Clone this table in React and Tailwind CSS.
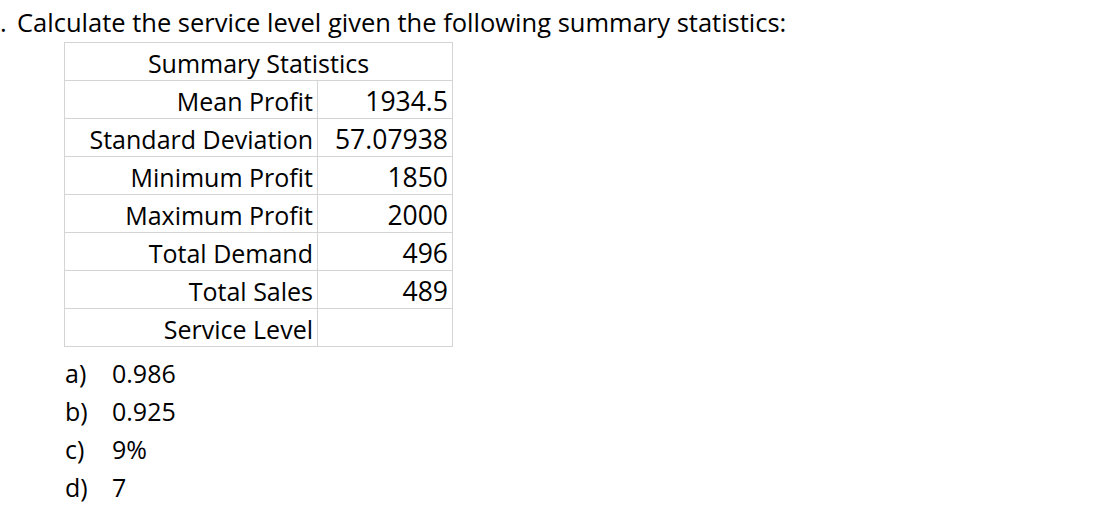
const rows = [
  ["Mean Profit", "1934.5"],
  ["Standard Deviation", "57.07938"],
  ["Minimum Profit", "1850"],
  ["Maximum Profit", "2000"],
  ["Total Demand", "496"],
  ["Total Sales", "489"],
  ["Service Level", ""],
];

const options = [
  ["a)", "0.986"],
  ["b)", "0.925"],
  ["c)", "9%"],
  ["d)", "7"],
];

export default function App() {
  return (
    <div className="w-[1097px] h-[508px] overflow-hidden bg-white text-black font-['Open_Sans',sans-serif]">
      <div className="flex h-[42px] items-center pt-[4px] text-[25.5px] leading-none">
        <span className="w-[17px]">.</span>
        <span>Calculate the service level given the following summary statistics:</span>
      </div>

      <table className="ml-[64px] border-collapse text-[25px] leading-none">
        <tbody>
          <tr className="h-[38px]">
            <td colSpan={2} className="border border-[#d4d4d4] pt-[3px] text-center">
              Summary Statistics
            </td>
          </tr>
          {rows.map(([label, value]) => (
            <tr key={label} className="h-[38px]">
              <td className="w-[253px] border border-[#d4d4d4] pt-[3px] pr-[4px] text-right">{label}</td>
              <td className="w-[135px] border border-[#d4d4d4] pt-[3px] pr-[4px] text-right text-[26.5px]">
                {value}
              </td>
            </tr>
          ))}
        </tbody>
      </table>

      <div className="mt-[7px] ml-[65px] flex flex-col text-[25px] leading-none">
        {options.map(([letter, answer]) => (
          <div key={letter} className="flex h-[38px] items-center">
            <span className="w-[47px]">{letter}</span>
            <span>{answer}</span>
          </div>
        ))}
      </div>
    </div>
  );
}
